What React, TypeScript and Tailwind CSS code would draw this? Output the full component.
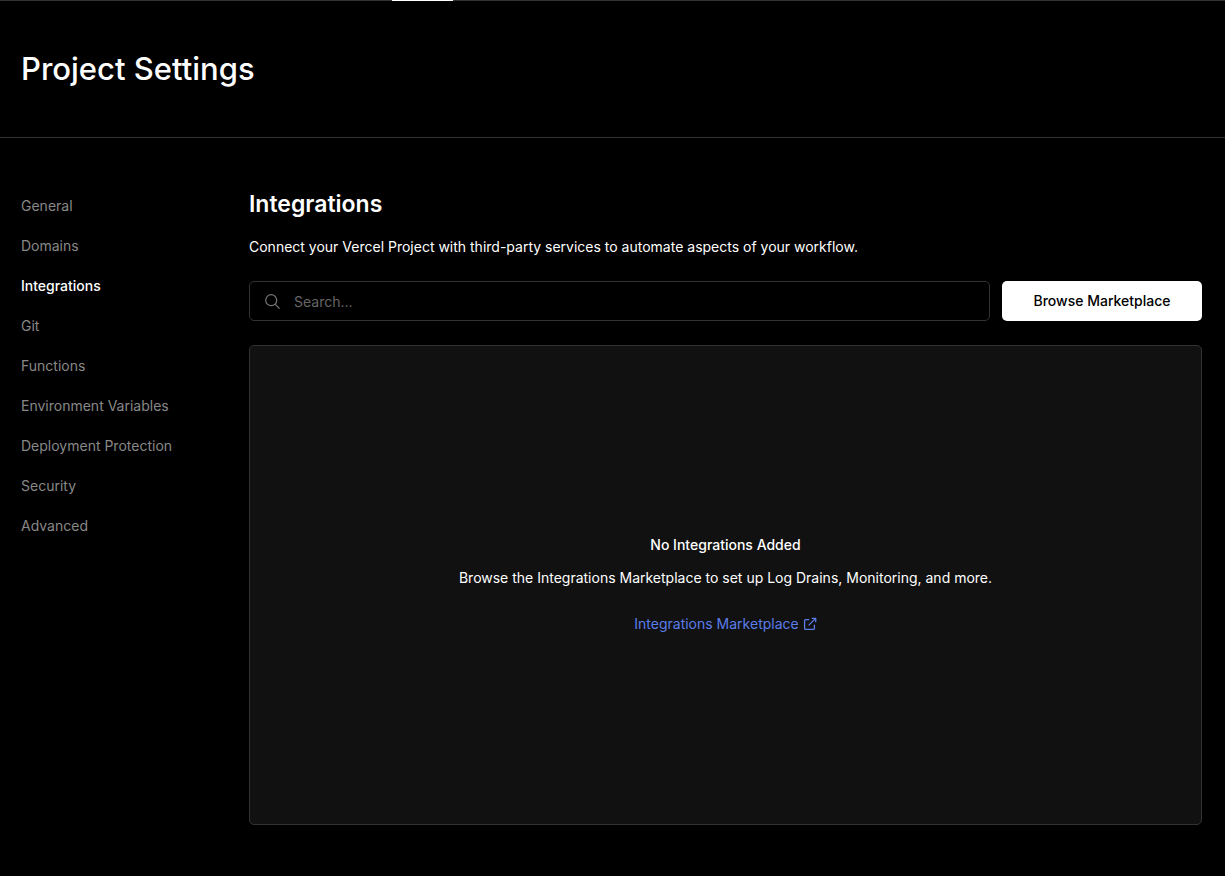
const NAV_ITEMS = [
  "General",
  "Domains",
  "Integrations",
  "Git",
  "Functions",
  "Environment Variables",
  "Deployment Protection",
  "Security",
  "Advanced",
];

function SearchIcon() {
  return (
    <svg
      aria-hidden="true"
      viewBox="0 0 15 15"
      fill="none"
      stroke="currentColor"
      strokeWidth="1.2"
      className="size-[15px] shrink-0 text-[#777777]"
    >
      <circle cx="6.2" cy="6.2" r="5.5" />
      <path d="M10.1 10.1 14.6 14.6" />
    </svg>
  );
}

function ExternalIcon() {
  return (
    <svg
      aria-hidden="true"
      viewBox="0 0 14 14"
      fill="none"
      stroke="currentColor"
      strokeWidth="1.3"
      strokeLinejoin="round"
      className="size-3.5 shrink-0"
    >
      <path d="M6.2 2.6H2.6a1 1 0 0 0-1 1v7.8a1 1 0 0 0 1 1h7.8a1 1 0 0 0 1-1V7.8" />
      <path d="M8.8 1.3h3.9v3.9" />
      <path d="M5.6 8.4 12.6 1.4" />
    </svg>
  );
}

export default function App() {
  return (
    <div className="min-h-screen bg-black font-['Inter',sans-serif] text-sm text-white antialiased">
      <div className="flex h-px bg-[#333333]">
        <div className="ml-[392px] w-[61px] bg-white" />
      </div>
      <header className="border-b border-[#333333] px-[21px] py-12">
        <h1 className="text-[31px] leading-10 font-medium">Project Settings</h1>
      </header>
      <div className="flex px-[21px] pt-12 pr-[23px] pb-12">
        <nav aria-label="Project settings" className="w-[228px] shrink-0">
          <ul>
            {NAV_ITEMS.map((item) => (
              <li key={item}>
                <a
                  href="#"
                  aria-current={item === "Integrations" ? "page" : undefined}
                  className="block leading-10 text-[#888888] aria-[current=page]:font-medium aria-[current=page]:text-white"
                >
                  {item}
                </a>
              </li>
            ))}
          </ul>
        </nav>
        <main className="min-w-0 grow">
          <h2 className="text-[23px] leading-9 font-semibold">Integrations</h2>
          <p className="mt-[13px] leading-6">
            Connect your Vercel Project with third-party services to automate aspects of your workflow.
          </p>
          <div className="mt-[22px] flex gap-3">
            <label className="flex h-10 min-w-0 grow items-center gap-3.5 rounded-[5px] border border-[#333333] px-[15px]">
              <SearchIcon />
              <input
                type="search"
                aria-label="Search integrations"
                placeholder="Search..."
                className="h-full min-w-0 grow bg-transparent outline-none placeholder:text-[#666666]"
              />
            </label>
            <button type="button" className="h-10 w-[200px] shrink-0 rounded-[5px] bg-white font-medium text-black">
              Browse Marketplace
            </button>
          </div>
          <section className="mt-6 flex min-h-[480px] flex-col items-center justify-center rounded-[5px] border border-[#333333] bg-[#111111] pb-0.5 text-center">
            <h3 className="leading-6 font-medium">No Integrations Added</h3>
            <p className="mt-[9px] leading-6">
              Browse the Integrations Marketplace to set up Log Drains, Monitoring, and more.
            </p>
            <a href="#" className="mt-[22px] flex items-center gap-1 leading-6 text-[#5b7de8]">
              Integrations Marketplace
              <ExternalIcon />
            </a>
          </section>
        </main>
      </div>
    </div>
  );
}
